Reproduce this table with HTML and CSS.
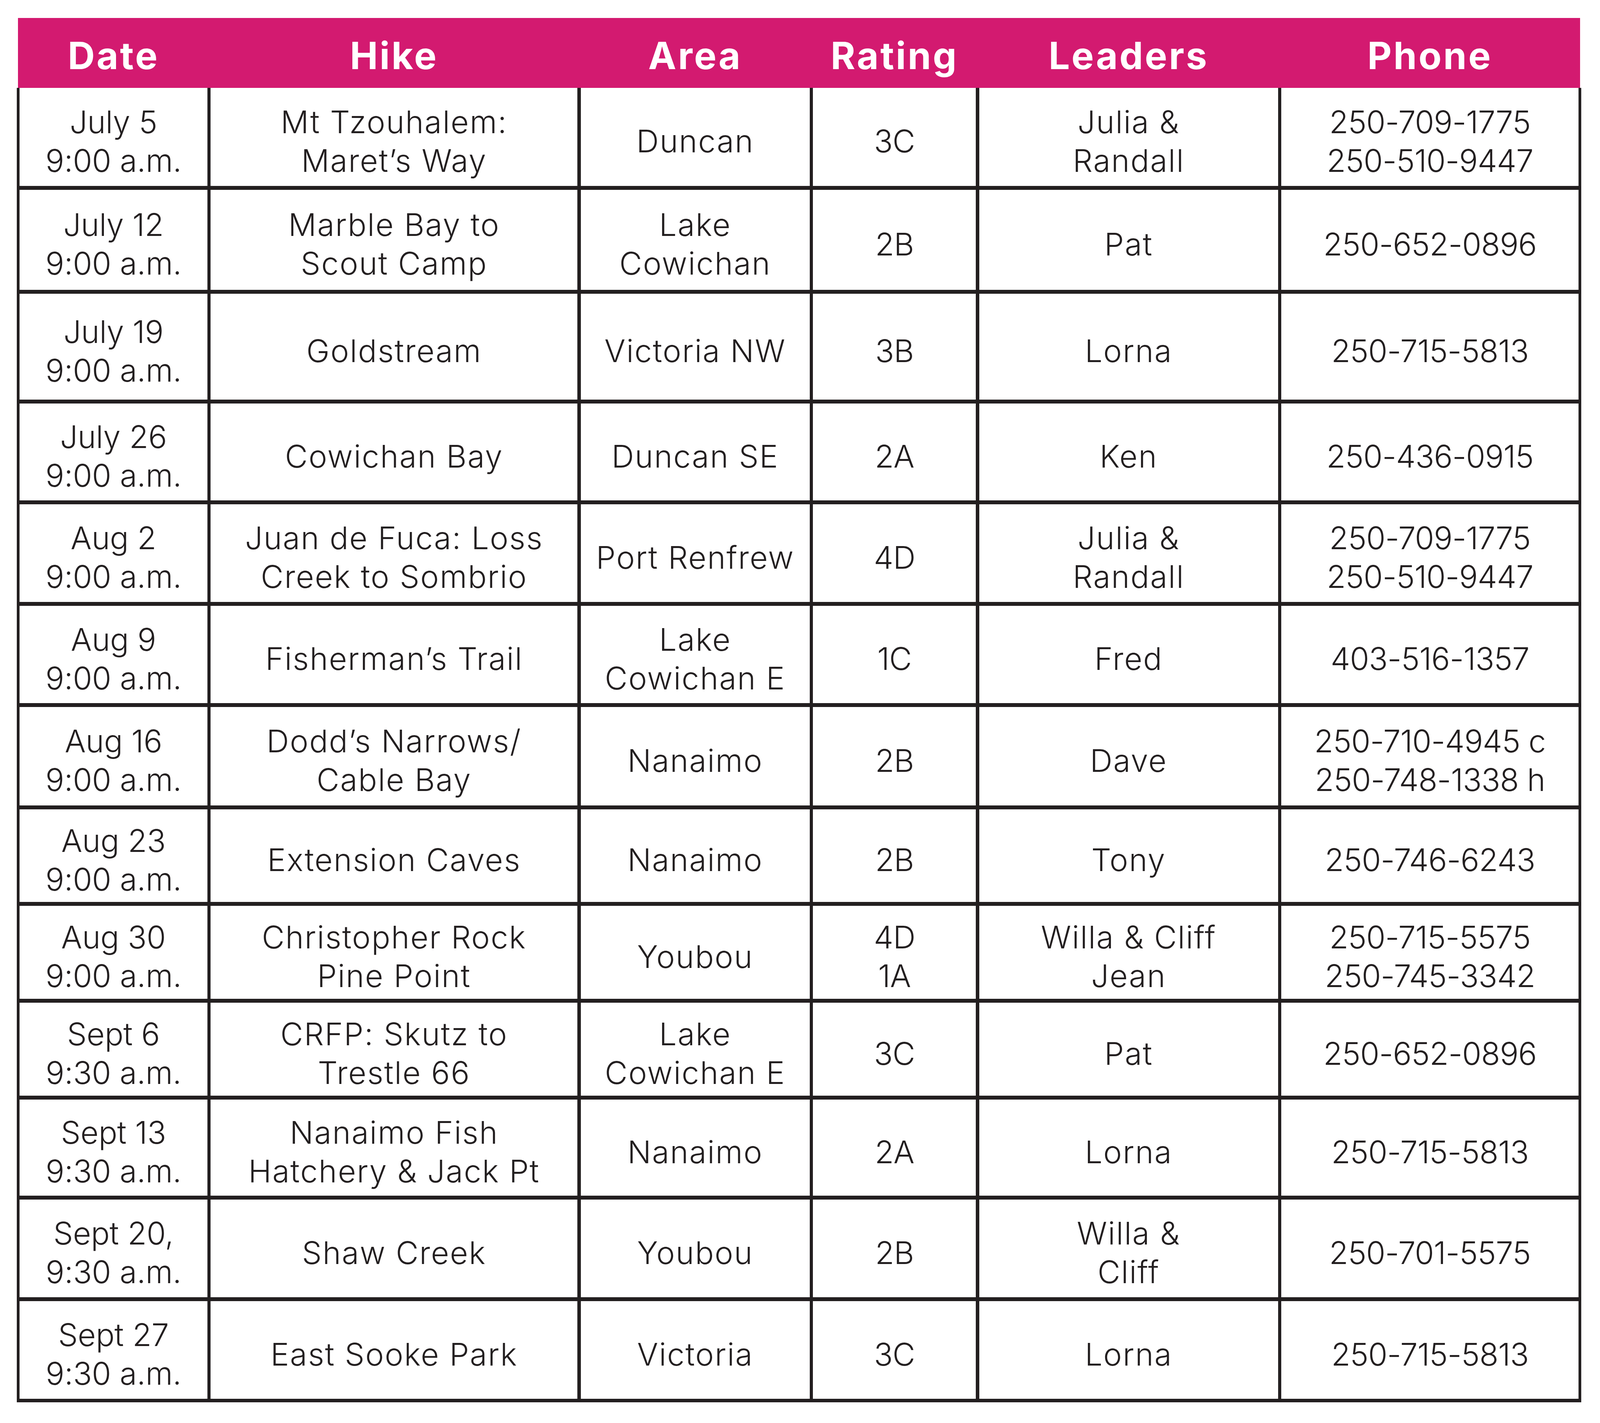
FILE: index.html
```html
<!DOCTYPE html>
<html lang="en">
<head>
<meta charset="utf-8">
<title>Hike Schedule</title>
<link rel="stylesheet" href="styles.css">
</head>
<body>
<div class="sheet">
  <div class="head">
    <div class="hcell">Date</div>
    <div class="hcell">Hike</div>
    <div class="hcell">Area</div>
    <div class="hcell">Rating</div>
    <div class="hcell">Leaders</div>
    <div class="hcell">Phone</div>
  </div>
  <div class="grid">
    <div class="cell date">July 5<br>9:00 a.m.</div>
    <div class="cell">Mt Tzouhalem:<br>Maret’s Way</div>
    <div class="cell">Duncan</div>
    <div class="cell num">3C</div>
    <div class="cell">Julia &amp;<br>Randall</div>
    <div class="cell num">250-709-1775<br>250-510-9447</div>

    <div class="cell date">July 12<br>9:00 a.m.</div>
    <div class="cell">Marble Bay to<br>Scout Camp</div>
    <div class="cell">Lake<br>Cowichan</div>
    <div class="cell num">2B</div>
    <div class="cell">Pat</div>
    <div class="cell num">250-652-0896</div>

    <div class="cell date">July 19<br>9:00 a.m.</div>
    <div class="cell">Goldstream</div>
    <div class="cell">Victoria NW</div>
    <div class="cell num">3B</div>
    <div class="cell">Lorna</div>
    <div class="cell num">250-715-5813</div>

    <div class="cell date">July 26<br>9:00 a.m.</div>
    <div class="cell">Cowichan Bay</div>
    <div class="cell">Duncan SE</div>
    <div class="cell num">2A</div>
    <div class="cell">Ken</div>
    <div class="cell num">250-436-0915</div>

    <div class="cell date">Aug 2<br>9:00 a.m.</div>
    <div class="cell">Juan de Fuca: Loss<br>Creek to Sombrio</div>
    <div class="cell">Port Renfrew</div>
    <div class="cell num">4D</div>
    <div class="cell">Julia &amp;<br>Randall</div>
    <div class="cell num">250-709-1775<br>250-510-9447</div>

    <div class="cell date">Aug 9<br>9:00 a.m.</div>
    <div class="cell">Fisherman’s Trail</div>
    <div class="cell">Lake<br>Cowichan E</div>
    <div class="cell num">1C</div>
    <div class="cell">Fred</div>
    <div class="cell num">403-516-1357</div>

    <div class="cell date">Aug 16<br>9:00 a.m.</div>
    <div class="cell">Dodd’s Narrows/<br>Cable Bay</div>
    <div class="cell">Nanaimo</div>
    <div class="cell num">2B</div>
    <div class="cell">Dave</div>
    <div class="cell num">250-710-4945 c<br>250-748-1338 h</div>

    <div class="cell date">Aug 23<br>9:00 a.m.</div>
    <div class="cell">Extension Caves</div>
    <div class="cell">Nanaimo</div>
    <div class="cell num">2B</div>
    <div class="cell">Tony</div>
    <div class="cell num">250-746-6243</div>

    <div class="cell date">Aug 30<br>9:00 a.m.</div>
    <div class="cell">Christopher Rock<br>Pine Point</div>
    <div class="cell">Youbou</div>
    <div class="cell num">4D<br>1A</div>
    <div class="cell">Willa &amp; Cliff<br>Jean</div>
    <div class="cell num">250-715-5575<br>250-745-3342</div>

    <div class="cell date">Sept 6<br>9:30 a.m.</div>
    <div class="cell">CRFP: Skutz to<br>Trestle 66</div>
    <div class="cell">Lake<br>Cowichan E</div>
    <div class="cell num">3C</div>
    <div class="cell">Pat</div>
    <div class="cell num">250-652-0896</div>

    <div class="cell date">Sept 13<br>9:30 a.m.</div>
    <div class="cell">Nanaimo Fish<br>Hatchery &amp; Jack Pt</div>
    <div class="cell">Nanaimo</div>
    <div class="cell num">2A</div>
    <div class="cell">Lorna</div>
    <div class="cell num">250-715-5813</div>

    <div class="cell date">Sept 20,<br>9:30 a.m.</div>
    <div class="cell">Shaw Creek</div>
    <div class="cell">Youbou</div>
    <div class="cell num">2B</div>
    <div class="cell">Willa &amp;<br>Cliff</div>
    <div class="cell num">250-701-5575</div>

    <div class="cell date">Sept 27<br>9:30 a.m.</div>
    <div class="cell">East Sooke Park</div>
    <div class="cell">Victoria</div>
    <div class="cell num">3C</div>
    <div class="cell">Lorna</div>
    <div class="cell num">250-715-5813</div>
  </div>
</div>
</body>
</html>
```
FILE: styles.css
```css
:root {
  /* horizontal unit: one pixel of the 4328px-wide reference */
  --u: calc(100vw / 4328);
  /* vertical unit: one pixel of the 3643px-tall reference */
  --v: calc(100vh / 3643);
}

html, body {
  margin: 0;
  padding: 0;
  background: #ffffff;
  overflow: hidden;
}

.sheet {
  width: calc(4232 * var(--u));
  margin: calc(46 * var(--v)) 0 0 calc(45 * var(--u));
}

.head {
  display: grid;
  grid-template-columns:
    calc(508 * var(--u)) calc(992 * var(--u)) calc(619 * var(--u))
    calc(441 * var(--u)) calc(808 * var(--u)) calc(804 * var(--u));
  column-gap: calc(9 * var(--u));
  height: calc(179 * var(--v));
  margin: 0 calc(3 * var(--u)) 0 calc(4 * var(--u));
  padding: 0 calc(4 * var(--u));
  background: #d31a70;
}

.hcell {
  display: flex;
  align-items: center;
  justify-content: center;
  padding-top: calc(13 * var(--v));
  box-sizing: border-box;
  font-family: Inter, "Liberation Sans", sans-serif;
  font-weight: 700;
  font-size: calc(96 * var(--v));
  line-height: calc(96 * var(--v));
  letter-spacing: calc(4.7 * var(--u));
  color: #ffffff;
  white-space: nowrap;
}

.grid {
  display: grid;
  grid-template-columns:
    calc(508 * var(--u)) calc(992 * var(--u)) calc(619 * var(--u))
    calc(441 * var(--u)) calc(808 * var(--u)) calc(804 * var(--u));
  grid-template-rows:
    calc(251 * var(--v)) calc(256 * var(--v)) calc(271 * var(--v))
    calc(248 * var(--v)) calc(250 * var(--v)) calc(249 * var(--v))
    calc(252 * var(--v)) calc(237 * var(--v)) calc(238 * var(--v))
    calc(238 * var(--v)) calc(246 * var(--v)) calc(250 * var(--v))
    calc(250 * var(--v));
  column-gap: calc(9 * var(--u));
  row-gap: calc(10 * var(--v));
  padding: 0 calc(7 * var(--u)) calc(9 * var(--v)) calc(8 * var(--u));
  background: #231f20;
}

.cell {
  display: flex;
  align-items: center;
  justify-content: center;
  text-align: center;
  padding-top: calc(20 * var(--v));
  box-sizing: border-box;
  background: #ffffff;
  font-family: Inter, "Liberation Sans", sans-serif;
  font-weight: 300;
  font-size: calc(80 * var(--v));
  line-height: calc(99 * var(--v));
  letter-spacing: calc(2.3 * var(--u));
  color: #231f20;
  white-space: nowrap;
}

.cell.date {
  letter-spacing: calc(-0.3 * var(--u));
}

.cell.num {
  letter-spacing: calc(-1 * var(--u));
}
```
